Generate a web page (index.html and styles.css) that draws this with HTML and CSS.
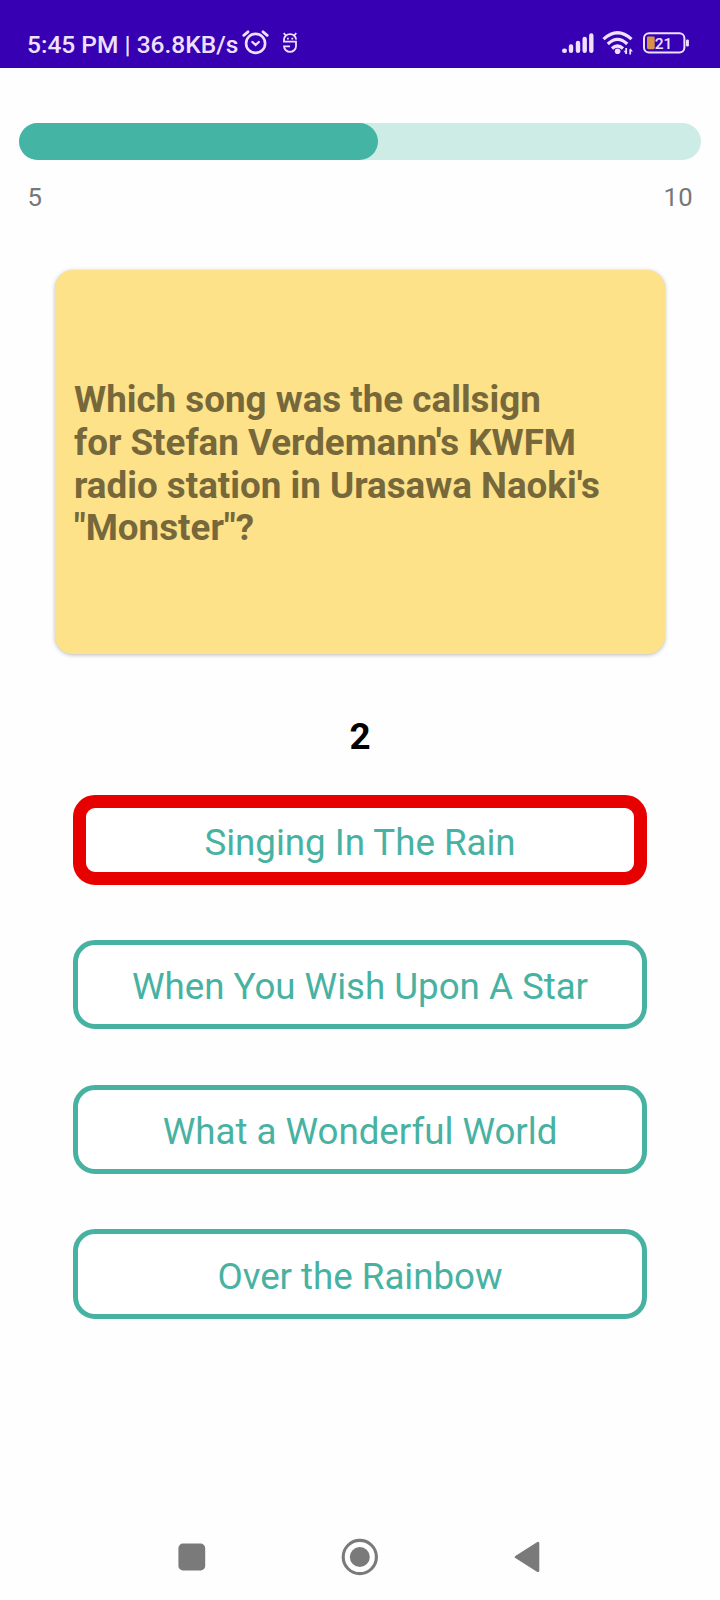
FILE: index.html
```html
<!DOCTYPE html>
<html lang="en">
<head>
<meta charset="utf-8">
<title>Quiz</title>
<link rel="stylesheet" href="styles.css">
</head>
<body>
<div class="screen">
  <header class="status-bar">
    <span class="status-text">5:45 PM | 36.8KB/s</span>
    <svg class="icon-alarm" width="28" height="26" viewBox="0 0 28 26" fill="none" stroke="#efe0ff" stroke-width="2.6" stroke-linecap="round">
      <circle cx="13.6" cy="14.4" r="9.5"/>
      <path d="M1.8 6.3 6 2.8M25.2 6.3 21 2.8" stroke-width="2.8"/>
      <path d="m10.4 13 3.2 3 3.2-3" stroke-width="2.3"/>
    </svg>
    <svg class="icon-s" width="16" height="22" viewBox="0 0 16 22" fill="none" stroke="#efe0ff" stroke-width="1.8">
      <path d="M14 7.6A6 5.2 0 0 0 8 2.2 6 5.2 0 0 0 2 7.4v2.2h12v4.6A6 5.8 0 0 1 8 19.9a6 5.8 0 0 1-6-5.6h6"/>
      <path d="m1.7 1.2 2.2 2.3M14.3 1.2l-2.2 2.3M5 6.6h1.8M9.4 6.6h1.8"/>
    </svg>
    <div class="status-right">
      <svg width="32" height="22" viewBox="0 0 32 22" fill="none" stroke="#efe0ff" stroke-width="4.4" stroke-linecap="round">
        <path d="M2.2 18.7h.6M9 14.5v4.2M16 11v7.7M22.7 7v11.7M29.3 3.4v15.3"/>
      </svg>
      <svg class="icon-wifi" width="32" height="26" viewBox="0 0 32 26" fill="none" stroke="#efe0ff" stroke-width="3.2">
        <path d="M1.5 9.2Q15.5-3.8 29.5 9.2M5.8 14Q15.5 4.8 25.2 14M10 18.5Q15.5 13.4 21 18.5"/>
        <circle cx="15.6" cy="21.2" r="2.8" fill="#efe0ff" stroke="none"/>
        <path d="M24.2 18v6M28.2 19.2v5.2" stroke-width="1.8"/>
        <path d="m24.3 24.2-2.8-3.4h2.8zM28.1 18l2.8 3.4h-2.8z" fill="#efe0ff" stroke="none"/>
      </svg>
      <svg class="icon-battery" width="47" height="22" viewBox="0 0 47 22">
        <rect x="1" y="1.3" width="40.4" height="19.2" rx="5" fill="none" stroke="#efe0ff" stroke-width="2"/>
        <rect x="4" y="4.5" width="7.7" height="12.7" rx="1.4" fill="#d99346"/>
        <rect x="43" y="7.4" width="2.9" height="7" rx="1.2" fill="#efe0ff"/>
        <text class="battery-text" x="11.7" y="16.8">21</text>
      </svg>
    </div>
  </header>
  <main class="quiz">
    <div class="progress"><div class="progress-fill"></div></div>
    <div class="progress-labels"><span>5</span><span>10</span></div>
    <section class="card">
      <p class="question">Which song was the callsign<br>for Stefan Verdemann's KWFM<br>radio station in Urasawa Naoki's<br>"Monster"?</p>
    </section>
    <div class="timer">2</div>
    <div class="answers">
      <button class="answer wrong">Singing In The Rain</button>
      <button class="answer">When You Wish Upon A Star</button>
      <button class="answer">What a Wonderful World</button>
      <button class="answer">Over the Rainbow</button>
    </div>
  </main>
  <nav class="nav-bar">
    <svg width="38" height="38" viewBox="0 0 38 38"><rect x="5.4" y="5.6" width="26.8" height="26.8" rx="4.5" fill="#7a7a7a"/></svg>
    <svg width="38" height="38" viewBox="0 0 38 38"><circle cx="18.8" cy="19" r="16.6" fill="none" stroke="#7a7a7a" stroke-width="3.1"/><circle cx="18.8" cy="19" r="10" fill="#7a7a7a"/></svg>
    <svg width="38" height="38" viewBox="0 0 38 38"><path d="M7 19 29 5.2v27.6z" fill="#7a7a7a" stroke="#7a7a7a" stroke-width="2.6" stroke-linejoin="round"/></svg>
  </nav>
</div>
</body>
</html>
```
FILE: styles.css
```css
* { box-sizing: border-box; }
body { margin: 0; background: #fefefe; font-family: Roboto, sans-serif; }
.screen { width: 720px; height: 1600px; display: flex; flex-direction: column; overflow: hidden; }
.status-bar { height: 68px; flex: none; background: #3700b3; color: #efe0ff; display: flex; align-items: flex-start; padding: 0 30.5px 0 27px; }
.status-text { font-size: 24.5px; font-weight: 500; line-height: 28px; margin-top: 31px; width: 215px; white-space: nowrap; }
.icon-alarm { margin-top: 29px; }
.icon-s { margin: 32px 0 0 12px; }
.status-right { margin: 32px 0 0 auto; display: flex; }
.icon-wifi { margin: -2px 0 0 8px; }
.icon-battery { margin-left: 9px; }
.battery-text { font-size: 15.5px; font-weight: 500; fill: #efe0ff; }
.quiz { flex: 1; padding-top: 55px; display: flex; flex-direction: column; }
.progress { height: 37px; margin: 0 18.6px 0 18.5px; border-radius: 19px; background: #cdece6; }
.progress-fill { width: 359.5px; height: 100%; border-radius: 19px; background: #44b5a4; }
.progress-labels { display: flex; justify-content: space-between; margin: 22px 27px 0 27.5px; font-size: 25.7px; line-height: 31px; letter-spacing: .3px; color: #777; }
.card { width: 610px; height: 384px; margin: 56.5px auto 0; border-radius: 18px; background: #fde289; box-shadow: 0 1px 4px rgba(0,0,0,.27); display: flex; align-items: center; padding: 6px 0 0 19px; }
.question { margin: 0; font-size: 36.75px; line-height: 42.7px; font-weight: 700; color: #76683a; white-space: nowrap; }
.timer { margin-top: 61.5px; height: 43px; line-height: 43px; font-size: 36.75px; font-weight: 700; text-align: center; color: #000; }
.answers { display: grid; gap: 55.3px; margin: 37.3px 73.3px 0; }
.answer { height: 89.4px; padding: 4.6px 0 0; border: 5px solid #47b2a2; border-radius: 22px; background: #fff; color: #47b2a2; font-family: inherit; font-size: 36.75px; line-height: 43px; letter-spacing: -.04px; white-space: nowrap; }
.answer.wrong { border: 13px solid #e60000; }
.nav-bar { flex: none; height: 88px; display: flex; gap: 130px; justify-content: center; padding-top: 25.5px; }
```
